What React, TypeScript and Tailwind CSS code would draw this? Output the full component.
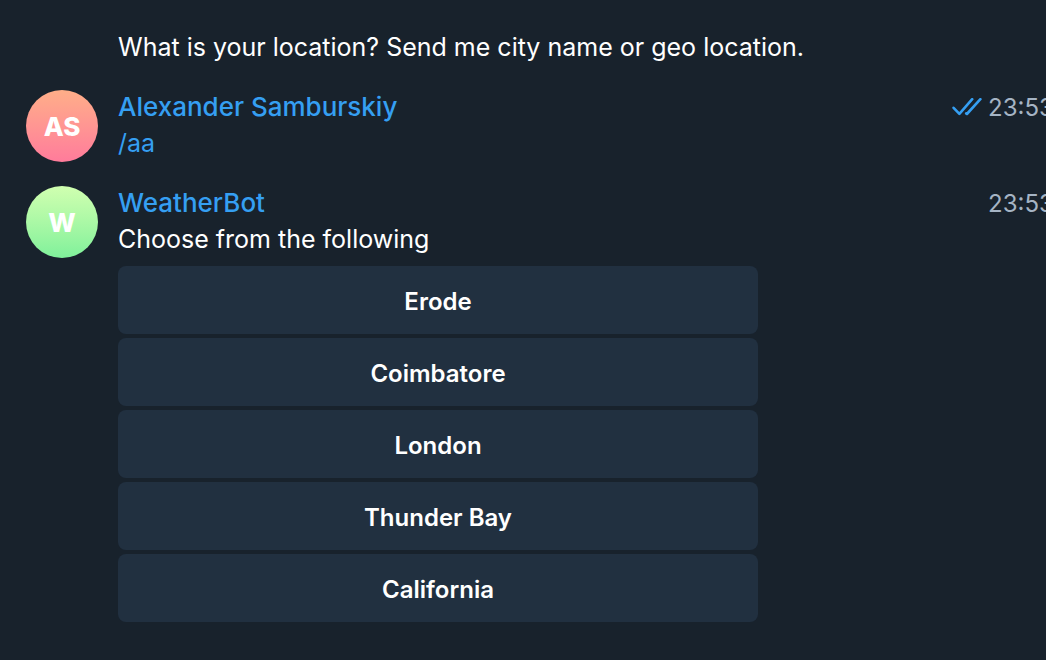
import type { ReactNode } from 'react';

type MessageProps = {
  initials: string;
  avatarClass: string;
  author: string;
  time: string;
  read?: boolean;
  children: ReactNode;
};

const cities = ['Erode', 'Coimbatore', 'London', 'Thunder Bay', 'California'];

function ReadTicks() {
  return (
    <svg
      className="h-5 w-8 shrink-0"
      viewBox="0 0 32 20"
      fill="none"
      stroke="#359ff2"
      strokeWidth="2.6"
      strokeLinecap="round"
      strokeLinejoin="round"
      role="img"
      aria-label="Read"
    >
      <path d="M1.6 9.8 7.4 15.8 20.2 1.2" />
      <path d="M14.2 15.4 14.9 16 28.4 1.2" />
    </svg>
  );
}

function Message({ initials, avatarClass, author, time, read, children }: MessageProps) {
  return (
    <article className="flex items-start gap-5">
      <div
        className={`flex size-18 shrink-0 items-center justify-center rounded-full bg-linear-to-b pt-0.5 text-[26px] font-extrabold text-white ${avatarClass}`}
      >
        {initials}
      </div>
      <div className="min-w-0 flex-1">
        <header className="flex h-[34px] items-start justify-between">
          <a href="#profile" className="text-[26px] leading-[34px] font-medium text-[#359ff2]">
            {author}
          </a>
          <div className="flex items-center gap-1">
            {read && <ReadTicks />}
            <time className="w-[58px] overflow-hidden text-[24px] leading-9 whitespace-nowrap text-[#a5b4c4]">
              {time}
            </time>
          </div>
        </header>
        {children}
      </div>
    </article>
  );
}

export default function App() {
  return (
    <main className="flex min-h-screen flex-col gap-6 overflow-x-hidden bg-[#18222c] pt-7 pb-9 pl-[26px] font-[Inter,sans-serif] text-[25px] leading-[38px] text-white">
      <p className="pl-[92px]">What is your location? Send me city name or geo location.</p>

      <Message
        initials="AS"
        avatarClass="from-[#ffae88] to-[#ff7b9b]"
        author="Alexander Samburskiy"
        time="23:53"
        read
      >
        <a href="#aa" className="block w-fit text-[#359ff2]">
          /aa
        </a>
      </Message>

      <Message
        initials="W"
        avatarClass="from-[#d0ffb0] to-[#7ff19b]"
        author="WeatherBot"
        time="23:53"
      >
        <p>Choose from the following</p>
        <div className="mt-2 flex max-w-[640px] flex-col gap-1">
          {cities.map((city) => (
            <button
              key={city}
              type="button"
              className="h-17 rounded-lg bg-[#213040] pt-1 text-[24px] font-semibold"
            >
              {city}
            </button>
          ))}
        </div>
      </Message>
    </main>
  );
}
